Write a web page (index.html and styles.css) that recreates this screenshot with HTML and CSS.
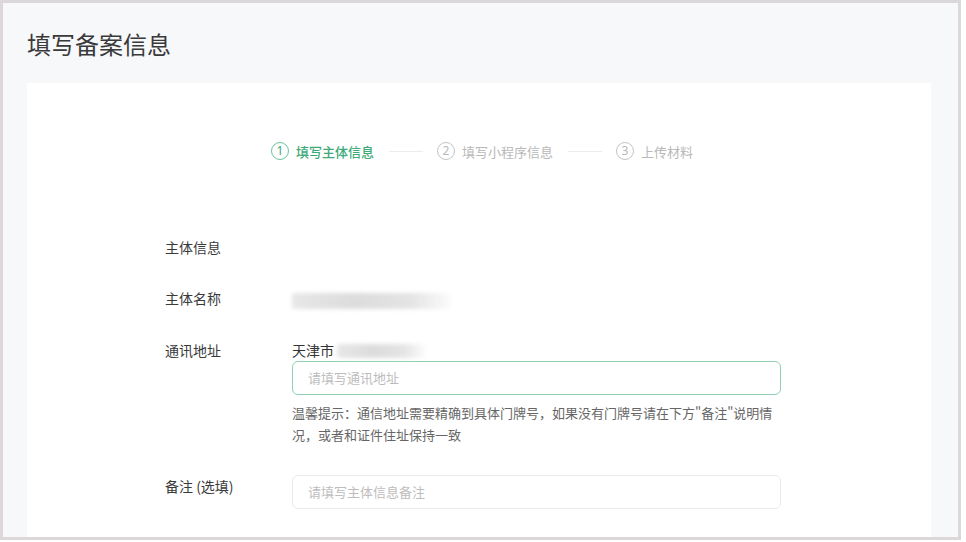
FILE: index.html
```html
<!DOCTYPE html>
<html lang="zh-CN">
<head>
<meta charset="utf-8">
<title>填写备案信息</title>
<link rel="stylesheet" href="styles.css">
</head>
<body>
<div class="frame">
  <h1 class="title">填写备案信息</h1>
  <div class="card">
    <div class="steps">
      <div class="step active"><span class="num">1</span><span class="label">填写主体信息</span></div>
      <span class="line"></span>
      <div class="step"><span class="num">2</span><span class="label">填写小程序信息</span></div>
      <span class="line"></span>
      <div class="step"><span class="num">3</span><span class="label">上传材料</span></div>
    </div>
    <div class="form">
      <div class="row row-section">
        <div class="lbl">主体信息</div>
      </div>
      <div class="row row-name">
        <div class="lbl">主体名称</div>
        <div class="val"><span class="blur blur-name"></span></div>
      </div>
      <div class="row row-addr">
        <div class="lbl">通讯地址</div>
        <div class="val">
          <div class="city">天津市<span class="blur blur-city"></span></div>
          <div class="input focus">请填写通讯地址</div>
          <p class="hint">温馨提示：通信地址需要精确到具体门牌号，如果没有门牌号请在下方"备注"说明情况，或者和证件住址保持一致</p>
        </div>
      </div>
      <div class="row row-note">
        <div class="lbl">备注 (选填)</div>
        <div class="val">
          <div class="input">请填写主体信息备注</div>
        </div>
      </div>
    </div>
  </div>
</div>
</body>
</html>
```

FILE: styles.css
```css
* { box-sizing: border-box; }
html, body { margin: 0; padding: 0; background: #ffffff; }
body {
  font-family: "Noto Sans CJK SC", "Noto Sans", sans-serif;
  color: #333;
  width: 966px;
  height: 542px;
  overflow: hidden;
}
.frame {
  width: 961px;
  height: 540px;
  border: 3px solid #dcd7d8;
  background: #f7f8fa;
  overflow: hidden;
  display: flex;
  flex-direction: column;
}
.title {
  margin: 0;
  padding: 24px 0 0 24px;
  height: 80px;
  font-size: 24px;
  font-weight: 400;
  line-height: 34px;
  color: #3a3a3a;
}
.card {
  margin: 0 27px 0 24px;
  background: #ffffff;
  flex: 1;
  padding-top: 56px;
}
.steps {
  display: flex;
  align-items: center;
  padding-left: 244px;
  height: 24px;
}
.step {
  display: flex;
  align-items: center;
  color: #b8b8b8;
  font-size: 13px;
}
.step .num {
  width: 18px;
  height: 18px;
  border: 1.5px solid #c4c4c4;
  border-radius: 50%;
  display: inline-flex;
  align-items: center;
  justify-content: center;
  font-size: 12px;
  line-height: 1;
  margin-right: 7px;
  font-family: "Noto Sans", sans-serif;
}
.step.active { color: #3daa78; font-weight: 500; }
.step.active .num { border-color: #6cc49b; color: #3daa78; font-weight: 400; }
.line {
  width: 34px;
  height: 1px;
  background: #ececec;
  margin: 0 14px 0 15px;
}
.form {
  padding-left: 138px;
  padding-top: 74px;
  font-size: 14px;
}
.row { display: flex; align-items: flex-start; }
.lbl {
  width: 127px;
  flex: none;
  line-height: 20px;
  color: #3a3a3a;
}
.val { width: 489px; }
.row-section { height: 51px; }
.row-name { height: 52px; }
.blur {
  display: inline-block;
  height: 16px;
  background: linear-gradient(90deg, rgba(215,215,215,0.6), #dcdcdc 40%, rgba(225,225,225,0.9) 75%, rgba(240,240,240,0.3));
  filter: blur(2px);
  vertical-align: middle;
  border-radius: 3px;
}
.blur-name { width: 158px; margin-top: 2px; }
.blur-city { width: 88px; height: 14px; margin-left: 3px; margin-top: -3px; }
.city { line-height: 20px; color: #333; height: 20px; }
.input {
  margin-top: 1px;
  height: 34px;
  border: 1px solid #eaeaea;
  border-radius: 6px;
  padding: 0 15px;
  line-height: 32px;
  font-size: 13px;
  color: #bdbdbd;
}
.input.focus { border: 1.5px solid #8fd0b1; line-height: 31px; }
.hint {
  margin: 7px 0 0;
  font-size: 13px;
  line-height: 22px;
  color: #666;
}
.row-addr { height: 135px; }
.row-note .lbl { margin-top: 1px; }
.row-note .input { margin-top: 0; }
```
